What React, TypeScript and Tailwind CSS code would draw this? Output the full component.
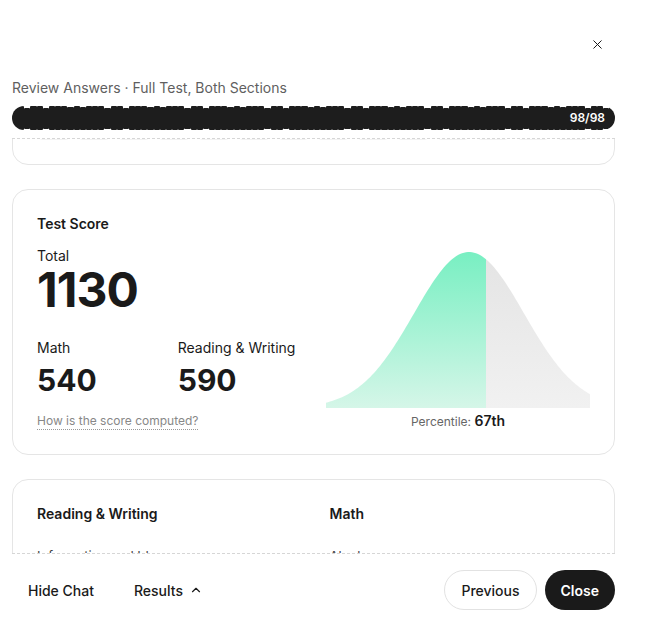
import React, { useLayoutEffect, useRef } from 'react';
import { X, ChevronUp } from 'lucide-react';

// ── Score data ─────────────────────────────────────────────────────────────

const TOTAL_QUESTIONS = 98;
const ANSWERED = 98;

const SECTIONS = [
  {
    title: 'Reading & Writing',
    domains: ['Information and Ideas', 'Craft and Structure', 'Expression of Ideas', 'Standard English Conventions'],
  },
  {
    title: 'Math',
    domains: ['Algebra', 'Advanced Math', 'Problem-Solving and Data Analysis', 'Geometry and Trigonometry'],
  },
];

// Segment heights give the bar its ragged edge
const SEGMENT_HEIGHTS = ['h-6', 'h-6', 'h-6', 'h-[23px]', 'h-6', 'h-[22px]', 'h-6', 'h-6', 'h-[23px]', 'h-6', 'h-[21px]', 'h-6', 'h-6'];

function segmentHeight(i: number) {
  return SEGMENT_HEIGHTS[(i * i * 3 + i * 5 + 1) % SEGMENT_HEIGHTS.length];
}

// ── Bell curve ─────────────────────────────────────────────────────────────

const CHART_W = 264;
const CHART_H = 156;
const MEAN_X = 143;
const SIGMA = 55;
const SPLIT_X = 160;

function bellPath() {
  const pts: string[] = [];
  for (let x = 0; x <= CHART_W; x += 2) {
    const y = CHART_H - CHART_H * Math.exp(-((x - MEAN_X) ** 2) / (2 * SIGMA * SIGMA));
    pts.push(`${x},${y.toFixed(2)}`);
  }
  return `M0,${CHART_H} L${pts.join(' L')} L${CHART_W},${CHART_H} Z`;
}

function BellChart() {
  const d = bellPath();
  return (
    <svg width={CHART_W} height={CHART_H} viewBox={`0 0 ${CHART_W} ${CHART_H}`}>
      <defs>
        <linearGradient id="below" x1="0" y1="0" x2="0" y2="1">
          <stop offset="0%" stopColor="#78efc2" />
          <stop offset="100%" stopColor="#d5f6e8" />
        </linearGradient>
        <linearGradient id="above" x1="0" y1="0" x2="0" y2="1">
          <stop offset="0%" stopColor="#e4e4e4" />
          <stop offset="100%" stopColor="#f1f1f1" />
        </linearGradient>
        <clipPath id="left">
          <rect x="0" y="0" width={SPLIT_X} height={CHART_H} />
        </clipPath>
        <clipPath id="right">
          <rect x={SPLIT_X} y="0" width={CHART_W - SPLIT_X} height={CHART_H} />
        </clipPath>
      </defs>
      <path d={d} fill="url(#above)" clipPath="url(#right)" />
      <path d={d} fill="url(#below)" clipPath="url(#left)" />
    </svg>
  );
}

// ── Pieces ─────────────────────────────────────────────────────────────────

function ProgressBar() {
  return (
    <div className="relative mt-2 flex h-6 items-center overflow-hidden rounded-full">
      {Array.from({ length: TOTAL_QUESTIONS }, (_, i) => (
        <div key={i} className={`flex-1 rounded-[1px] bg-[#1d1d1d] ${segmentHeight(i)}`} />
      ))}
      <span className="absolute right-[10px] top-1/2 -translate-y-1/2 text-[12px] font-semibold text-white">
        {ANSWERED}/{TOTAL_QUESTIONS}
      </span>
    </div>
  );
}

function QuestionGrid() {
  return (
    <div className="rounded-2xl border border-[#e5e5e5] bg-white p-6">
      <div className="grid grid-cols-14 gap-1.5">
        {Array.from({ length: TOTAL_QUESTIONS }, (_, i) => (
          <div key={i} className="h-7 rounded-md bg-[#f2f2f2]" />
        ))}
      </div>
    </div>
  );
}

function TestScoreCard() {
  return (
    <div className="flex items-end justify-between rounded-2xl border border-[#e5e5e5] bg-white p-6">
      <div className="flex flex-col">
        <h3 className="text-[14px] font-semibold leading-5">Test Score</h3>
        <span className="mt-3 text-[14px] leading-5">Total</span>
        <span className="text-[48px] font-bold leading-[48px] tracking-[-0.02em]">1130</span>
        <div className="mt-6 flex gap-[81px]">
          <div className="flex flex-col">
            <span className="text-[14px] leading-5">Math</span>
            <span className="mt-[7px] text-[30px] font-bold leading-[30px]">540</span>
          </div>
          <div className="flex flex-col">
            <span className="text-[14px] leading-5">Reading &amp; Writing</span>
            <span className="mt-[7px] text-[30px] font-bold leading-[30px]">590</span>
          </div>
        </div>
        <a className="mt-[18px] w-fit border-b border-dotted border-[#999] text-[12px] leading-4 text-[#888]">
          How is the score computed?
        </a>
      </div>
      <div className="flex flex-col items-center">
        <BellChart />
        <div className="mt-[5px] text-[12px] leading-4 text-[#666]">
          Percentile: <span className="text-[14px] font-semibold text-[#1a1a1a]">67th</span>
        </div>
      </div>
    </div>
  );
}

function SectionBreakdown() {
  return (
    <div className="grid grid-cols-2 gap-x-8 rounded-2xl border border-[#e5e5e5] bg-white p-6">
      {SECTIONS.map((s) => (
        <div key={s.title} className="flex flex-col">
          <h4 className="text-[14px] font-semibold leading-5">{s.title}</h4>
          <ul className="mt-[22px] flex flex-col gap-4">
            {s.domains.map((d) => (
              <li key={d} className="text-[13px] leading-5 text-[#444]">{d}</li>
            ))}
          </ul>
        </div>
      ))}
    </div>
  );
}

// ── Page ───────────────────────────────────────────────────────────────────

export default function App() {
  const scrollRef = useRef<HTMLDivElement>(null);
  const gridRef = useRef<HTMLDivElement>(null);

  // Start the list scrolled so the score card sits near the top
  useLayoutEffect(() => {
    if (scrollRef.current && gridRef.current) {
      scrollRef.current.scrollTop = gridRef.current.offsetHeight - 26;
    }
  }, []);

  return (
    <div className="h-[626px] w-[652px] bg-white font-['Inter',sans-serif] text-[#1a1a1a]">
      <div className="flex w-[627px] flex-col px-3 pt-[26px]">
        <div className="flex justify-end">
          <button type="button" className="flex h-9 w-9 items-center justify-center text-[#1a1a1a]">
            <X size={15} strokeWidth={1.6} />
          </button>
        </div>

        <p className="mt-4 text-[14px] leading-5 text-[#5f5f5f]">Review Answers · Full Test, Both Sections</p>

        <ProgressBar />

        <div
          ref={scrollRef}
          className="mt-2 h-[416px] overflow-hidden border-y border-dashed border-[#d6d6d6]"
        >
          <div className="flex flex-col gap-6">
            <div ref={gridRef}>
              <QuestionGrid />
            </div>
            <TestScoreCard />
            <SectionBreakdown />
          </div>
        </div>

        <div className="mt-4 flex items-center justify-between">
          <div className="flex items-center gap-2">
            <button type="button" className="h-10 px-4 text-[14px] font-medium">Hide Chat</button>
            <button type="button" className="flex h-10 items-center gap-[6px] px-4 text-[14px] font-medium">
              Results <ChevronUp size={14} strokeWidth={2} />
            </button>
          </div>
          <div className="flex items-center gap-2">
            <button type="button" className="h-10 rounded-full border border-[#e2e2e2] px-4 text-[14px] font-medium">
              Previous
            </button>
            <button type="button" className="h-10 rounded-full bg-[#1a1a1a] px-4 text-[14px] font-semibold text-white">
              Close
            </button>
          </div>
        </div>
      </div>
    </div>
  );
}
